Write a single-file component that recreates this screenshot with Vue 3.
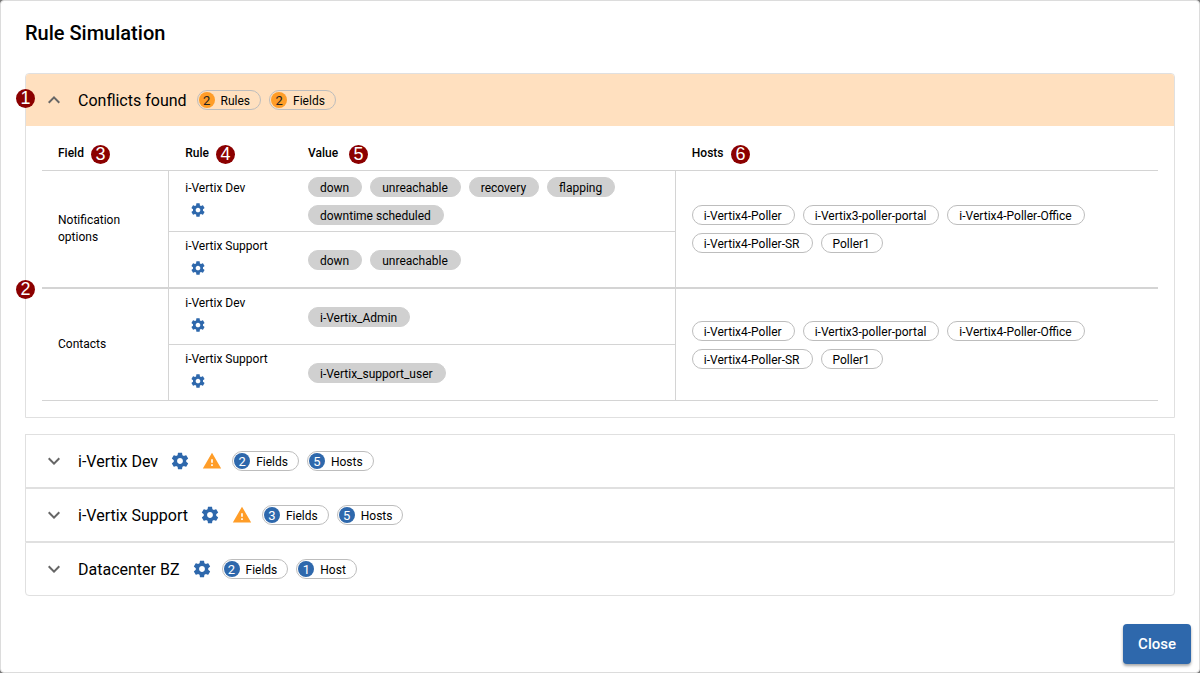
<script setup>
import { ref } from 'vue'

const gear =
  'M19.43 12.98c.04-.32.07-.64.07-.98s-.03-.66-.07-.98l2.11-1.65c.19-.15.24-.42.12-.64l-2-3.46c-.12-.22-.39-.3-.61-.22l-2.49 1c-.52-.4-1.08-.73-1.69-.98l-.38-2.65C14.46 2.18 14.25 2 14 2h-4c-.25 0-.46.18-.49.42l-.38 2.65c-.61.25-1.17.59-1.69.98l-2.49-1c-.23-.09-.49 0-.61.22l-2 3.46c-.13.22-.07.49.12.64l2.11 1.65c-.04.32-.07.65-.07.98s.03.66.07.98l-2.11 1.65c-.19.15-.24.42-.12.64l2 3.46c.12.22.39.3.61.22l2.49-1c.52.4 1.08.73 1.69.98l.38 2.65c.03.24.24.42.49.42h4c.25 0 .46-.18.49-.42l.38-2.65c.61-.25 1.17-.59 1.69-.98l2.49 1c.23.09.49 0 .61-.22l2-3.46c.12-.22.07-.49-.12-.64l-2.11-1.65zM12 15.5c-1.93 0-3.5-1.57-3.5-3.5s1.57-3.5 3.5-3.5 3.5 1.57 3.5 3.5-1.57 3.5-3.5 3.5z'

const hosts = ['i-Vertix4-Poller', 'i-Vertix3-poller-portal', 'i-Vertix4-Poller-Office', 'i-Vertix4-Poller-SR', 'Poller1']

const conflicts = [
  {
    field: 'Notification options',
    rules: [
      { name: 'i-Vertix Dev', values: ['down', 'unreachable', 'recovery', 'flapping', 'downtime scheduled'] },
      { name: 'i-Vertix Support', values: ['down', 'unreachable'] }
    ]
  },
  {
    field: 'Contacts',
    rules: [
      { name: 'i-Vertix Dev', values: ['i-Vertix_Admin'] },
      { name: 'i-Vertix Support', values: ['i-Vertix_support_user'] }
    ]
  }
]

const rules = [
  { name: 'i-Vertix Dev', warning: true, counts: [[2, 'Fields'], [5, 'Hosts']] },
  { name: 'i-Vertix Support', warning: true, counts: [[3, 'Fields'], [5, 'Hosts']] },
  { name: 'Datacenter BZ', warning: false, counts: [[2, 'Fields'], [1, 'Host']] }
]

const open = ref(true)
</script>

<template>
  <main class="dialog">
    <h1>Rule Simulation</h1>

    <section class="panel conflicts">
      <header class="summary warn">
        <button class="toggle" type="button" :aria-expanded="open" aria-label="Toggle conflicts" @click="open = !open">
          <svg viewBox="0 0 24 24"><path d="M12 8l-6 6 1.41 1.41L12 10.83l4.59 4.58L18 14z" /></svg>
        </button>
        <h2>Conflicts found</h2>
        <span class="chip count orange"><b>2</b>Rules</span>
        <span class="chip count orange"><b>2</b>Fields</span>
      </header>
      <div v-if="open" class="details">
        <table>
          <thead>
            <tr>
              <th class="c-field">Field</th>
              <th class="c-rule">Rule</th>
              <th class="c-value">Value</th>
              <th>Hosts</th>
            </tr>
          </thead>
          <tbody v-for="c in conflicts" :key="c.field">
            <tr v-for="(r, i) in c.rules" :key="r.name">
              <td v-if="i === 0" class="line-right" :rowspan="c.rules.length">{{ c.field }}</td>
              <td>
                <div class="rule">
                  <span>{{ r.name }}</span>
                  <button class="gear small" type="button" :aria-label="'Edit ' + r.name">
                    <svg viewBox="0 0 24 24"><path :d="gear" /></svg>
                  </button>
                </div>
              </td>
              <td class="line-right">
                <div class="chips">
                  <span v-for="v in r.values" :key="v" class="chip filled">{{ v }}</span>
                </div>
              </td>
              <td v-if="i === 0" :rowspan="c.rules.length">
                <div class="chips">
                  <span v-for="h in hosts" :key="h" class="chip">{{ h }}</span>
                </div>
              </td>
            </tr>
          </tbody>
        </table>
      </div>
    </section>

    <div class="rules">
      <section v-for="r in rules" :key="r.name" class="panel">
        <header class="summary">
          <button class="toggle" type="button" aria-expanded="false" :aria-label="'Toggle ' + r.name">
            <svg viewBox="0 0 24 24"><path d="M16.59 8.59L12 13.17 7.41 8.59 6 10l6 6 6-6z" /></svg>
          </button>
          <h2>{{ r.name }}</h2>
          <button class="gear" type="button" :aria-label="'Edit ' + r.name">
            <svg viewBox="0 0 24 24"><path :d="gear" /></svg>
          </button>
          <svg v-if="r.warning" class="alert" viewBox="0 0 24 24"><path d="M1 21h22L12 2 1 21zm12-3h-2v-2h2v2zm0-4h-2v-4h2v4z" /></svg>
          <span v-for="[n, label] in r.counts" :key="label" class="chip count"><b>{{ n }}</b>{{ label }}</span>
        </header>
      </section>
    </div>

    <footer><button class="close" type="button">Close</button></footer>

    <span class="pin p1">1</span>
    <span class="pin p2">2</span>
    <span class="pin p3">3</span>
    <span class="pin p4">4</span>
    <span class="pin p5">5</span>
    <span class="pin p6">6</span>
  </main>
</template>

<style>
body {
  background: #777;
}
</style>

<style scoped>
.dialog {
  position: relative;
  box-sizing: border-box;
  min-height: 100vh;
  padding: 16px 24px 8px;
  border: 1px solid #dcdcdc;
  border-radius: 4px;
  background: #fff;
  color: #000;
  font: 12px/17px Roboto, sans-serif;
  display: flex;
  flex-direction: column;
}
h1 {
  margin: 0 0 24px;
  font-size: 20px;
  line-height: 32px;
  font-weight: 500;
}
.panel {
  border: 1px solid #e0e0e0;
}
.conflicts {
  border-radius: 4px 4px 0 0;
  margin-bottom: 16px;
}
.rules .panel:last-child {
  border-radius: 0 0 4px 4px;
}
.summary {
  display: flex;
  align-items: center;
  height: 52px;
  padding: 0 16px;
}
.warn {
  background: #ffe0bf;
  border-radius: 3px 3px 0 0;
}
.toggle,
.gear {
  padding: 0;
  border: 0;
  background: none;
  cursor: pointer;
}
svg {
  display: block;
}
.toggle {
  width: 24px;
  height: 24px;
  margin-right: 12px;
}
.toggle svg {
  width: 24px;
  height: 24px;
  fill: #666;
}
h2 {
  margin: 0 10px 0 0;
  padding-top: 2px;
  font-size: 16px;
  line-height: 24px;
  font-weight: 400;
}
.gear svg {
  width: 20px;
  height: 20px;
  fill: #2e68ac;
}
.summary .gear {
  margin: 0 10px 0 2px;
}
.gear.small {
  margin: 5px;
}
.gear.small svg {
  width: 16px;
  height: 16px;
}
.alert {
  width: 20px;
  height: 20px;
  margin: 0 10px 0 2px;
  fill: #ff9d28;
}
.chip {
  box-sizing: border-box;
  height: 20px;
  padding: 0 12px 0 11px;
  border: 1px solid #bdbdbd;
  border-radius: 10px;
  line-height: 20px;
  white-space: nowrap;
}
.filled {
  border-color: #d0d0d0;
  background: #d0d0d0;
}
.count {
  display: inline-flex;
  gap: 6px;
  align-items: flex-start;
  padding: 0 10px 0 1px;
  margin-right: 8px;
}
.count b {
  width: 16px;
  height: 16px;
  margin-top: 1px;
  border-radius: 8px;
  background: #2e68ac;
  color: #fff;
  font-size: 13px;
  font-weight: 400;
  line-height: 17px;
  text-align: center;
}
.orange b {
  background: #ff9d28;
  color: #222;
}
.chips {
  display: flex;
  flex-wrap: wrap;
  gap: 8px;
}
.details {
  padding: 8px 16px 16px;
}
table {
  width: 100%;
  table-layout: fixed;
  border-collapse: separate;
  border-spacing: 0;
}
th,
td {
  box-sizing: border-box;
  padding: 6px 16px;
  border-bottom: 1px solid #d4d4d4;
  text-align: left;
  vertical-align: middle;
}
th {
  height: 37px;
  padding-top: 8px;
  font-weight: 500;
}
.c-field {
  width: 11.4%;
}
.c-rule {
  width: 11%;
}
.c-value {
  width: 34.4%;
}
.line-right {
  border-right: 1px solid #d4d4d4;
}
tbody:not(:last-child) tr:last-child td,
tbody:not(:last-child) td[rowspan] {
  border-bottom-width: 2px;
}
.rule {
  display: flex;
  flex-direction: column;
  align-items: flex-start;
}
footer {
  display: flex;
  justify-content: flex-end;
  margin: auto -16px 0 0;
}
.close {
  height: 40px;
  padding: 0 15px;
  border: 0;
  border-radius: 4px;
  background: #2e68ac;
  box-shadow: 0 2px 3px rgba(0, 0, 0, 0.35);
  color: #fff;
  font: 500 15px/24px Roboto, sans-serif;
  cursor: pointer;
}
.pin {
  position: absolute;
  width: 19px;
  height: 19px;
  border-radius: 50%;
  background: #8b0000;
  color: #fff;
  font: 18px/18px "Liberation Sans", sans-serif;
  text-align: center;
}
.p1 { left: 15px; top: 88px; }
.p2 { left: 15px; top: 279px; }
.p3 { left: 90px; top: 144px; }
.p4 { left: 215px; top: 144px; }
.p5 { left: 348px; top: 144px; }
.p6 { left: 730px; top: 144px; }
</style>
